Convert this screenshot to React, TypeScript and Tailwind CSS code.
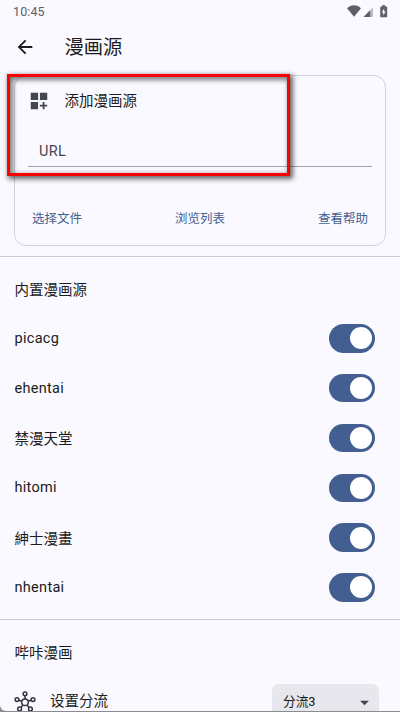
import { useState } from "react";
import type { ReactNode } from "react";
import { MdArrowBack, MdArrowDropDown, MdDashboardCustomize } from "react-icons/md";

const builtInSources = [
  "picacg",
  "ehentai",
  "禁漫天堂",
  "hitomi",
  "紳士漫畫",
  "nhentai",
];

function StatusBar() {
  return (
    <div className="flex h-[22px] shrink-0 items-center justify-between pt-px pl-[13px] pr-[12px] text-[#5f6066]">
      <span className="pt-px text-[12.5px] leading-none tracking-[0.1px]">
        10:45
      </span>
      <svg width="41" height="14" viewBox="0 0 41 14" fill="currentColor">
        <path d="M0 3.300C4-0.900 10.200-0.900 14 3.300L7 11.800Z" />
        <path d="M16.5 12L26 2.500V12Z" opacity="0.4" />
        <path d="M16.5 12L23.2 5.300V12Z" />
        <path
          fillRule="evenodd"
          d="M35 0.300h3.2v1.3h1.1q.9 0 .9.9v8.900q0 .9-.9.9h-5.2q-.9 0-.9-.9V2.500q0-.9.9-.9H35ZM37.200 3.400L34.700 7.400h1.500v3.200l2.500-4.200h-1.500Z"
        />
      </svg>
    </div>
  );
}

function HubIcon() {
  return (
    <svg
      width="22"
      height="22"
      viewBox="0 0 22 22"
      fill="none"
      stroke="#35373e"
      strokeWidth="1.5"
    >
      <circle cx="11" cy="11.3" r="3.300" />
      <circle cx="11" cy="2.800" r="1.900" />
      <circle cx="3" cy="8.600" r="1.900" />
      <circle cx="19" cy="8.600" r="1.900" />
      <circle cx="5.600" cy="18" r="1.900" />
      <circle cx="16.400" cy="18" r="1.900" />
      <path d="M11 4.700V8M4.800 9.200L7.900 10.200M17.200 9.200L14.100 10.200M6.800 16.500L9 13.900M15.200 16.500L13 13.900" />
    </svg>
  );
}

function Switch({
  checked,
  onChange,
  label,
}: {
  checked: boolean;
  onChange: () => void;
  label: string;
}) {
  return (
    <button
      type="button"
      role="switch"
      aria-checked={checked}
      aria-label={label}
      onClick={onChange}
      className={`flex h-[28.500px] w-[46.500px] items-center rounded-full px-[3.500px] ${
        checked ? "justify-end bg-[#435e91]" : "justify-start bg-[#c4c6d0]"
      }`}
    >
      <span className="size-[22px] rounded-full bg-white" />
    </button>
  );
}

function SectionTitle({ children }: { children: ReactNode }) {
  return (
    <h2 className="flex h-[50px] items-center px-[14.500px] pt-1 font-normal">
      {children}
    </h2>
  );
}

function AddSourceCard() {
  return (
    <section className="relative mx-[14px] mt-[3.500px] h-[171px] rounded-[12px] border border-[#d0d1d8]">
      <div className="flex h-[50px] items-center gap-[14.500px] pl-[13px]">
        <MdDashboardCustomize className="size-[22px] text-[#44464f]" />
        <span className="pt-[2px]">添加漫画源</span>
      </div>
      <div className="mx-[13px] mt-[7.500px] flex h-[34px] items-center border-b-[1.500px] border-[#a2a3ab] pt-[5px] pl-[11px]">
        <input
          type="text"
          placeholder="URL"
          className="w-full bg-transparent text-[14.500px] tracking-[0.300px] outline-none placeholder:text-[#44464f]"
        />
      </div>
      <div className="mt-[34px] flex h-[36px] items-center justify-between px-[17px] text-[12.500px] text-[#435e91]">
        <button type="button">选择文件</button>
        <button type="button">浏览列表</button>
        <button type="button">查看帮助</button>
      </div>
      <div className="pointer-events-none absolute -left-[8px] -top-[1.500px] h-[102px] w-[283px] border-3 border-[#fe0000] shadow-[2px_2px_5px_1px_rgba(0,0,0,0.6),inset_2px_2px_5px_1px_rgba(0,0,0,0.5)]" />
    </section>
  );
}

export default function App() {
  const [disabled, setDisabled] = useState<string[]>([]);

  function toggleSource(name: string) {
    setDisabled((current) =>
      current.includes(name)
        ? current.filter((item) => item !== name)
        : [...current, name]
    );
  }

  return (
    <div className="h-[712px] w-[400px] overflow-hidden bg-[#8b8c90]">
      <div className="flex h-[711px] flex-col overflow-hidden rounded-bl-[6px] bg-[#faf9ff] font-[Roboto,'Noto_Sans_CJK_SC',sans-serif] text-[14.500px] text-[#1a1b20]">
        <StatusBar />
        <header className="flex h-[49px] shrink-0 items-center pl-[14px]">
          <MdArrowBack className="size-[22px]" />
          <h1 className="ml-[28.500px] pt-[2px] text-[19.300px] leading-none">
            漫画源
          </h1>
        </header>
        <main className="shrink-0">
          <AddSourceCard />
          <div className="mt-[10.500px] border-t border-[#c9cad2] pt-[6.500px]">
            <SectionTitle>内置漫画源</SectionTitle>
            {builtInSources.map((name) => (
              <div
                key={name}
                className="flex h-[49.800px] items-center justify-between pl-[14.500px] pr-[25px]"
              >
                {/^[a-z]+$/.test(name) ? (
                  <span className="pt-px tracking-[0.300px]">{name}</span>
                ) : (
                  <span className="pt-[4px]">{name}</span>
                )}
                <Switch
                  label={name}
                  checked={!disabled.includes(name)}
                  onChange={() => toggleSource(name)}
                />
              </div>
            ))}
          </div>
          <div className="mt-[6.500px] border-t border-[#c9cad2] pt-[7px]">
            <SectionTitle>哔咔漫画</SectionTitle>
            <div className="flex h-[50px] items-center pl-[14px] pr-[21px]">
              <HubIcon />
              <span className="ml-[14px] pt-px leading-[18px]">设置分流</span>
              <button
                type="button"
                className="mt-px ml-auto flex h-[36px] w-[107px] items-center justify-between rounded-[7px] bg-[#e8e7ed] pl-[11px] pr-[4px] text-[12.700px]"
              >
                <span className="leading-[16px]">分流3</span>
                <MdArrowDropDown className="size-[21px] text-[#44464f]" />
              </button>
            </div>
          </div>
        </main>
      </div>
    </div>
  );
}
